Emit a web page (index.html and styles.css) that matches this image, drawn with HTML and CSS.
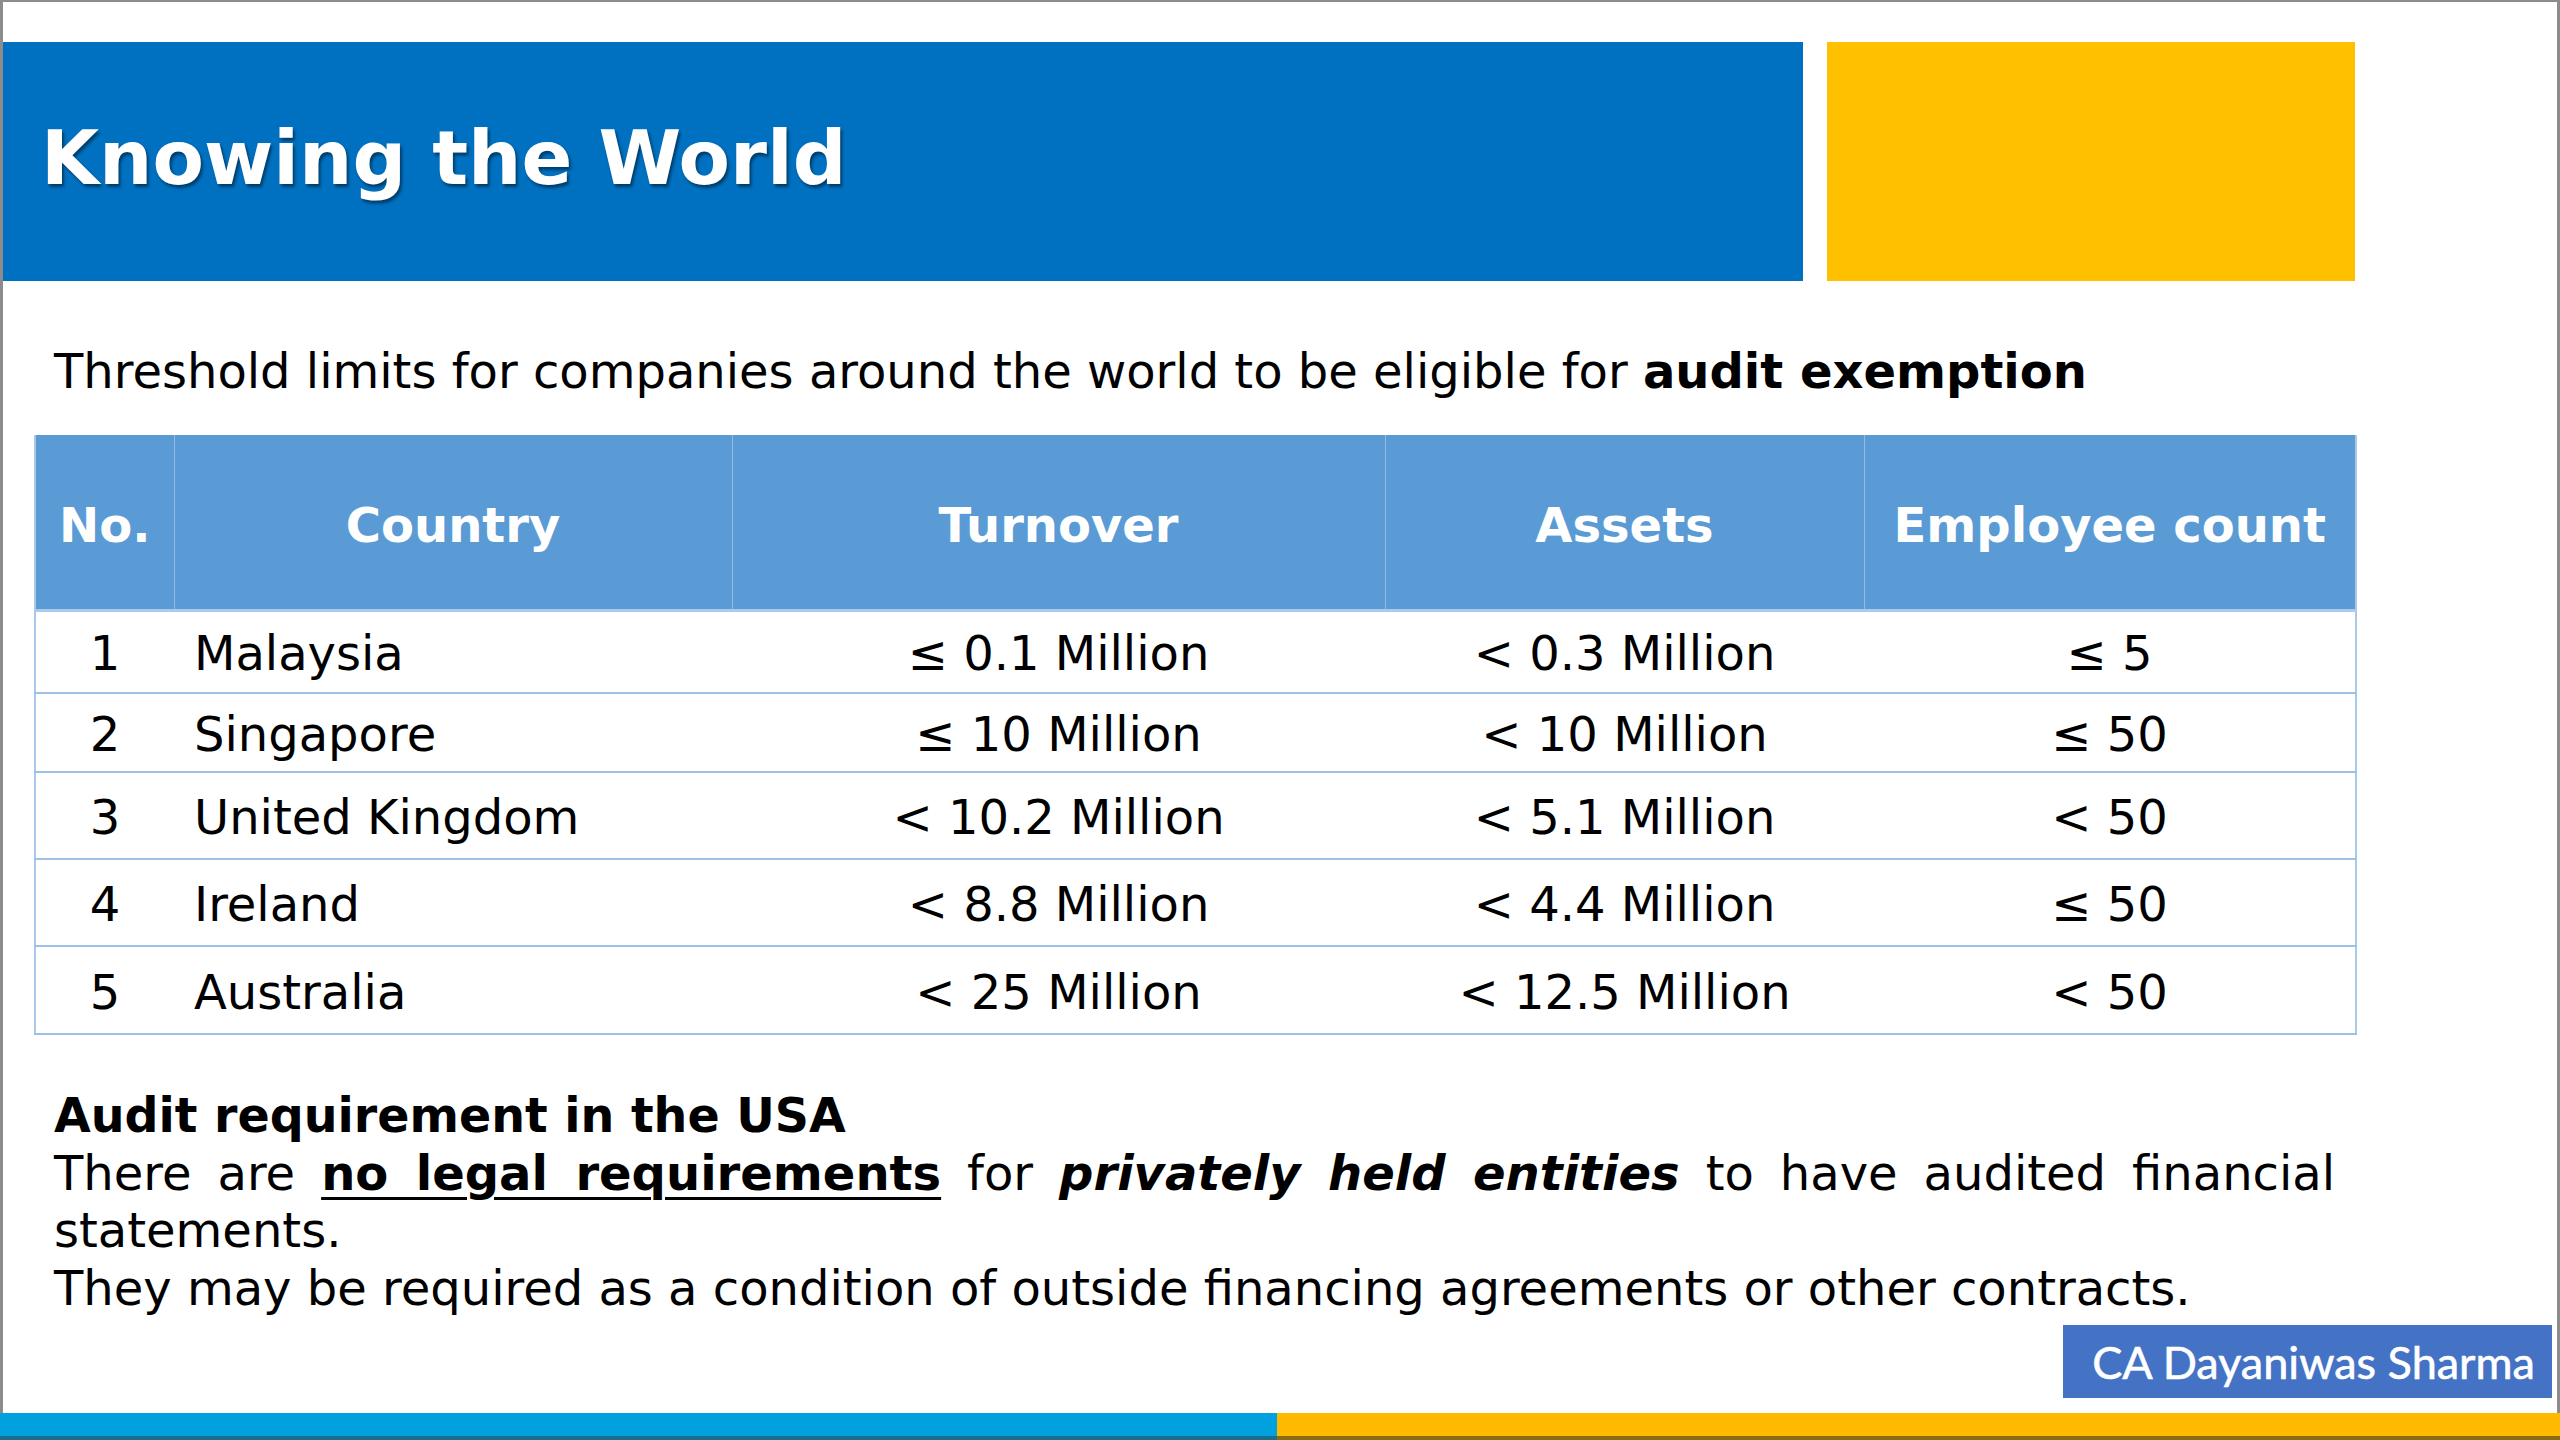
FILE: index.html
```html
<!DOCTYPE html>
<html lang="en">
<head>
<meta charset="utf-8">
<title>Knowing the World</title>
<link rel="stylesheet" href="styles.css">
</head>
<body>
<div class="page">
  <div class="slide">
    <header class="banner">
      <div class="banner-main"><h1 class="banner-title">Knowing the World</h1></div>
      <div class="banner-accent"></div>
    </header>

    <p class="lead">Threshold limits for companies around the world to be eligible for <b class="strong">audit exemption</b></p>

    <table class="limits">
      <colgroup>
        <col class="c-no"><col class="c-country"><col class="c-turnover"><col class="c-assets"><col class="c-emp">
      </colgroup>
      <thead>
        <tr><th>No.</th><th>Country</th><th>Turnover</th><th>Assets</th><th>Employee count</th></tr>
      </thead>
      <tbody>
        <tr><td class="num">1</td><td class="name">Malaysia</td><td>≤ 0.1 Million</td><td>&lt; 0.3 Million</td><td>≤ 5</td></tr>
        <tr><td class="num">2</td><td class="name">Singapore</td><td>≤ 10 Million</td><td>&lt; 10 Million</td><td>≤ 50</td></tr>
        <tr><td class="num">3</td><td class="name">United Kingdom</td><td>&lt; 10.2 Million</td><td>&lt; 5.1 Million</td><td>&lt; 50</td></tr>
        <tr><td class="num">4</td><td class="name">Ireland</td><td>&lt; 8.8 Million</td><td>&lt; 4.4 Million</td><td>≤ 50</td></tr>
        <tr><td class="num">5</td><td class="name">Australia</td><td>&lt; 25 Million</td><td>&lt; 12.5 Million</td><td>&lt; 50</td></tr>
      </tbody>
    </table>

    <section class="usa">
      <h2 class="usa-title">Audit requirement in the USA</h2>
      <p class="usa-text justify">There are <b class="strong under">no legal requirements</b> for <b class="strong ital">privately held entities</b> to have audited financial statements.</p>
      <p class="usa-text">They may be required as a condition of outside financing agreements or other contracts.</p>
    </section>

    <div class="badge-row"><div class="badge">CA Dayaniwas Sharma</div></div>
  </div>
  <div class="bottom-bar"><div class="bar-blue"></div><div class="bar-yellow"></div></div>
</div>
</body>
</html>
```

FILE: styles.css
```css
* { box-sizing: border-box; }
html, body { margin: 0; padding: 0; background: #ffffff; }
body { width: 2560px; height: 1440px; overflow: hidden; }

.page {
  width: 2560px;
  height: 1440px;
  display: flex;
  flex-direction: column;
  font-family: "DejaVu Sans", sans-serif;
  color: #000;
}

.slide {
  flex: 1;
  display: flex;
  flex-direction: column;
  border-top: 2px solid #8c8c8c;
  border-left: 3px solid #8c8c8c;
  border-right: 3px solid #8c8c8c;
  background: #fff;
}

/* ---------- banner ---------- */
.banner {
  display: flex;
  gap: 24px;
  margin-top: 40px;
  height: 239px;
}
.banner-main {
  width: 1800px;
  background: #0070c0;
  display: flex;
  align-items: center;
  padding-left: 38px;
  padding-bottom: 8px;
}
.banner-title {
  margin: 0;
  font-weight: bold;
  font-size: 75px;
  color: #fff;
  text-shadow: 2px 3px 3px rgba(0, 0, 0, 0.45);
}
.banner-accent {
  width: 528px;
  background: #ffc000;
}

/* ---------- lead ---------- */
.lead {
  margin: 62px 0 0 51px;
  font-size: 48px;
  line-height: 56px;
}
.strong {
  font-weight: bold;
}
.under { text-decoration: underline; text-decoration-thickness: 3px; text-underline-offset: 7px; }
.ital { font-style: italic; }

/* ---------- table ---------- */
.limits {
  margin: 36px 0 0 31px;
  width: 2321px;
  border-collapse: collapse;
  table-layout: fixed;
  font-size: 48px;
  border-left: 2px solid #a9c9ea;
  border-right: 2px solid #a9c9ea;
}
.c-no { width: 139px; }
.c-country { width: 558px; }
.c-turnover { width: 653px; }
.c-assets { width: 479px; }
.c-emp { width: 492px; }

.limits th {
  height: 175px;
  background: #5b9bd5;
  color: #fff;
  font-weight: bold;
  font-size: 48px;
  text-align: center;
  padding: 6px 0 0;
  border-left: 1px solid #8fbbe6;
  border-right: 1px solid #8fbbe6;
  border-bottom: 3px solid #a9cbed;
}
.limits td {
  padding: 3px 0 0;
  text-align: center;
  vertical-align: middle;
  border-bottom: 2px solid #9dc0e6;
  white-space: nowrap;
}
.limits tbody tr:nth-child(1) td { height: 83px; }
.limits tbody tr:nth-child(2) td { height: 79px; }
.limits tbody tr:nth-child(3) td { height: 87px; }
.limits tbody tr:nth-child(4) td { height: 87px; }
.limits tbody tr:nth-child(5) td { height: 88px; }
.limits td.name { text-align: left; padding-left: 20px; }

/* ---------- USA section ---------- */
.usa {
  margin: 52px 0 0 51px;
  width: 2281px;
}
.usa-title {
  margin: 0;
  font-weight: bold;
  font-size: 47.5px;
  line-height: 57.5px;
}
.usa-text {
  margin: 0;
  font-size: 48px;
  line-height: 57.5px;
}
.justify { text-align: justify; }

/* ---------- badge ---------- */
.badge-row {
  display: flex;
  justify-content: flex-end;
  margin-top: 8px;
  padding-right: 5px;
}
.badge {
  width: 489px;
  height: 73px;
  background: #4472c4;
  color: #fff;
  font-family: Lato, "Open Sans", sans-serif;
  font-size: 45px;
  display: flex;
  align-items: center;
  justify-content: center;
  padding-left: 12px;
  -webkit-text-stroke: 0.6px #fff;
}

/* ---------- bottom bar ---------- */
.bottom-bar {
  height: 27px;
  display: flex;
}
.bar-blue {
  width: 1277px;
  background: #00a1de;
  border-bottom: 4px solid #1c6d8c;
}
.bar-yellow {
  flex: 1;
  background: #ffba00;
  border-bottom: 4px solid #8a6c10;
}
```
